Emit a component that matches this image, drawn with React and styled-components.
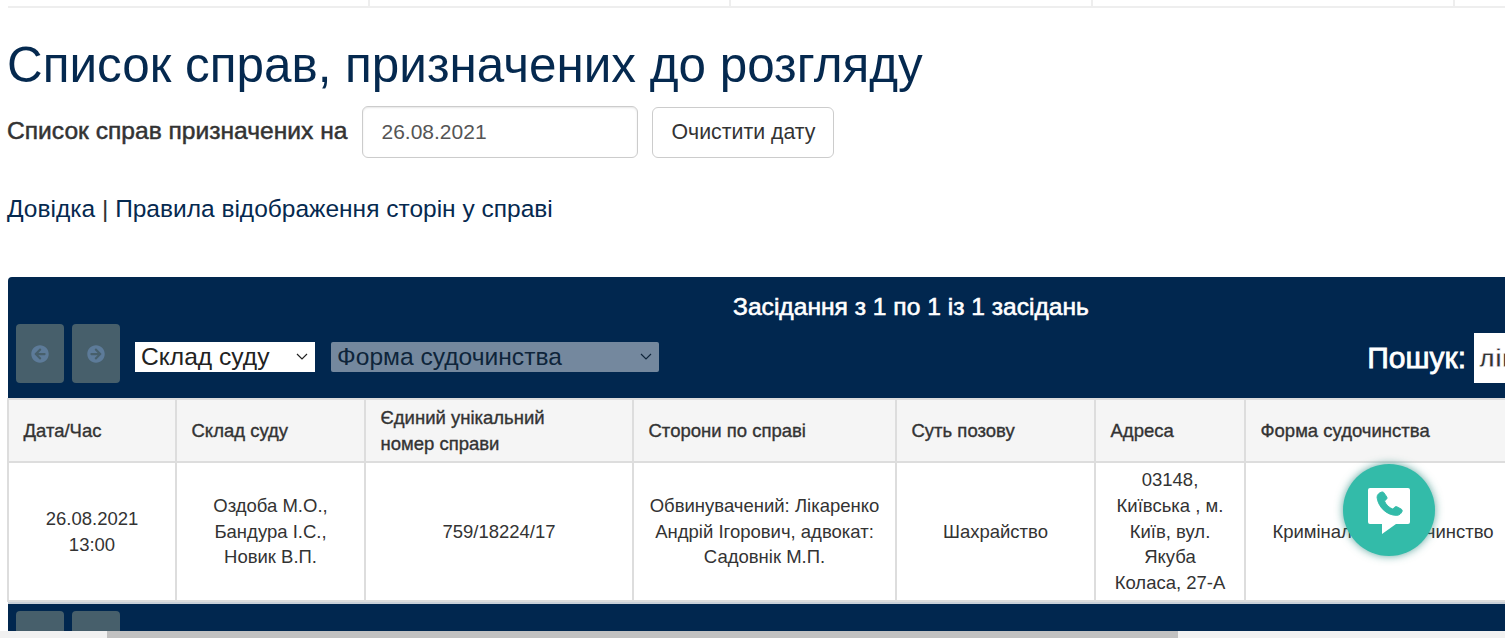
import React from 'react';
import styled, { createGlobalStyle } from 'styled-components';
import { FaArrowCircleLeft, FaArrowCircleRight } from 'react-icons/fa';

const navy = '#01274f';

const chevron =
  "url(\"data:image/svg+xml,%3Csvg xmlns='http://www.w3.org/2000/svg' width='12' height='7' viewBox='0 0 12 7'%3E%3Cpath d='M1 1l5 5 5-5' fill='none' stroke='%23222' stroke-width='1.2'/%3E%3C/svg%3E\")";

const columns = [
  { title: 'Дата/Час', width: 168, value: '26.08.2021 13:00' },
  { title: 'Склад суду', width: 189, value: 'Оздоба М.О., Бандура І.С., Новик В.П.' },
  { title: 'Єдиний унікальний\nномер справи', width: 268, value: '759/18224/17' },
  {
    title: 'Сторони по справі',
    width: 263,
    value: 'Обвинувачений: Лікаренко Андрій Ігорович, адвокат: Садовнік М.П.',
  },
  { title: 'Суть позову', width: 199, value: 'Шахрайство' },
  { title: 'Адреса', width: 150, value: '03148, Київська , м. Київ, вул. Якуба Коласа, 27-А' },
  { title: 'Форма судочинства', width: 276, value: 'Кримінальне судочинство' },
];

const GlobalStyle = createGlobalStyle`
  html,
  body {
    margin: 0;
    height: 100%;
    overflow: hidden;
    background: #fff;
  }

  body {
    font-family: 'Liberation Sans', Arial, sans-serif;
    color: #333;
  }
`;

const Page = styled.div`
  display: flex;
  flex-direction: column;
  height: 638px;
`;

const Viewport = styled.main`
  flex: 1;
  min-height: 0;
  overflow: hidden;
  padding: 0 0 0 8px;
`;

const TopNav = styled.nav`
  display: flex;
  width: 1600px;
  height: 6px;
  border-bottom: 2px solid #eee;
`;

const NavCell = styled.div`
  box-sizing: border-box;
  width: ${(p) => p.$width}px;
  flex: none;
  border-right: 2px solid #eee;
`;

const Title = styled.h1`
  margin: 30px 0 0 -1px;
  font-size: 49.4px;
  line-height: 54px;
  font-weight: 400;
  color: #05294f;
  white-space: nowrap;
`;

const DateRow = styled.form`
  display: flex;
  align-items: center;
  margin-top: 14px;
  height: 52px;
`;

const DateLabel = styled.label`
  margin: -2px 15px 0 -1px;
  font-size: 24.6px;
  -webkit-text-stroke: 0.5px #333;
  color: #333;
`;

const DateInput = styled.input`
  box-sizing: border-box;
  width: 276px;
  height: 52px;
  padding: 0 18px;
  border: 1px solid #ccc;
  border-radius: 6px;
  box-shadow: inset 0 1px 2px rgba(0, 0, 0, 0.1);
  font: 400 21px 'Liberation Sans', Arial, sans-serif;
  color: #555;
`;

const ClearButton = styled.button`
  box-sizing: border-box;
  width: 182px;
  height: 51px;
  margin-left: 14px;
  border: 1px solid #ccc;
  border-radius: 6px;
  background: #fff;
  font: 400 21.3px 'Liberation Sans', Arial, sans-serif;
  color: #333;
`;

const HelpLinks = styled.p`
  margin: 37px 0 0 -1px;
  font-size: 24.5px;
  line-height: 28px;
  color: #333;
`;

const HelpLink = styled.a`
  color: #05294f;
  text-decoration: none;
`;

const Panel = styled.section`
  width: 1806px;
  margin-top: 54px;
`;

const Bar = styled.div`
  background: ${navy};
  border-radius: ${(p) => (p.$top ? '4px 4px 0 0' : '0')};
  padding: ${(p) => (p.$top ? '16px 0 0' : '7px 8px')};
  height: ${(p) => (p.$top ? '105px' : 'auto')};
  border-top: ${(p) => (p.$top ? 'none' : '2px solid #c9d0d8')};
`;

const Summary = styled.div`
  text-align: center;
  font-size: 24.6px;
  line-height: 28px;
  -webkit-text-stroke: 0.6px #fff;
  color: #fff;
`;

const Controls = styled.div`
  display: flex;
  align-items: flex-end;
  justify-content: space-between;
  margin-top: 3px;
  padding-left: 8px;
`;

const ControlGroup = styled.div`
  display: flex;
  align-items: center;
`;

const PageButton = styled.button`
  display: flex;
  align-items: center;
  justify-content: center;
  width: 48px;
  height: 59px;
  margin-right: 8px;
  padding: 0;
  border: none;
  border-radius: 4px;
  background: #475f6b;
  color: #5d7b99;
  font-size: 18px;
`;

const FilterSelect = styled.select`
  box-sizing: border-box;
  width: ${(p) => p.$width}px;
  height: 30px;
  margin: 6px 0 0 ${(p) => p.$gap}px;
  padding: 0 0 0 6px;
  border: none;
  border-radius: ${(p) => (p.disabled ? '2px' : '0')};
  appearance: none;
  background: #fff ${chevron} no-repeat right 7px center;
  font: 400 24.6px 'Liberation Sans', Arial, sans-serif;
  color: #222;
  opacity: ${(p) => (p.disabled ? 0.45 : 1)};
`;

const SearchLabel = styled.label`
  display: flex;
  align-items: center;
  font-size: 30px;
  -webkit-text-stroke: 0.8px #fff;
  color: #fff;
`;

const SearchInput = styled.input`
  box-sizing: border-box;
  width: 340px;
  height: 50px;
  margin-left: 8px;
  padding: 0 5px;
  border: none;
  font: 700 25px 'Liberation Sans', Arial, sans-serif;
  color: #333;
`;

const Table = styled.table`
  width: 1806px;
  margin-left: -1px;
  table-layout: fixed;
  border-collapse: collapse;
  font-size: 18.5px;
  line-height: 25.7px;
`;

const HeadCell = styled.th`
  width: ${(p) => p.$width}px;
  box-sizing: border-box;
  height: 63px;
  padding: 0 14.5px;
  border: 2px solid #ddd;
  background: #f5f5f5;
  text-align: left;
  font-weight: 400;
  white-space: pre-line;
  -webkit-text-stroke: 0.35px #333;
  color: #333;
`;

const BodyCell = styled.td`
  box-sizing: border-box;
  height: 139px;
  padding: 0 15px;
  border: 2px solid #ddd;
  text-align: center;
  color: #333;
`;

const CallButton = styled.button`
  position: fixed;
  right: 70px;
  bottom: 82px;
  display: flex;
  align-items: center;
  justify-content: center;
  width: 92px;
  height: 92px;
  padding: 0;
  border: none;
  border-radius: 50%;
  background: #33bba9;
  box-shadow: 0 0 8px rgba(30, 130, 120, 0.7);
`;

const Scrollbar = styled.div`
  flex: none;
  height: 7px;
  padding-left: 107px;
  background: #f1f1f1;
`;

const ScrollThumb = styled.div`
  width: 1071px;
  height: 100%;
  background: #c1c1c1;
`;

const CallIcon = () => (
  <svg width="42" height="46" viewBox="0 0 42 46" style={{ marginTop: 1 }}>
    <path
      d="M2 0H40a2 2 0 0 1 2 2V34a2 2 0 0 1-2 2H28L14 46V36H2a2 2 0 0 1-2-2V2a2 2 0 0 1 2-2z"
      fill="#fff"
    />
    <path
      transform="translate(1.6 -1.4) scale(.93 .9)"
      d="M13 6c-3 1-5 3-5 6 1 10 10 20 21 20 3 0 5-2 6-4.500 .3-1-.2-2-1-2.500l-4.500-2.500c-1-.5-2-.3-2.700.5l-1.800 2c-4-1.500-7.500-5-9-9l2-1.800c.8-.7 1-1.800.5-2.700L15.500 7c-.5-1-1.500-1.300-2.500-1z"
      fill="#33bba9"
      stroke="#33bba9"
      strokeWidth="1"
      strokeLinejoin="round"
    />
  </svg>
);

const ToolbarButtons = () => (
  <ControlGroup>
    <PageButton type="button" disabled aria-label="Назад">
      <FaArrowCircleLeft />
    </PageButton>
    <PageButton type="button" disabled aria-label="Вперед">
      <FaArrowCircleRight />
    </PageButton>
  </ControlGroup>
);

const App = () => (
  <Page>
    <GlobalStyle />
    <Viewport>
      <TopNav>
        {[362, 361, 362, 362].map((width, i) => (
          <NavCell key={i} $width={width} />
        ))}
      </TopNav>
      <Title>Список справ, призначених до розгляду</Title>
      <DateRow>
        <DateLabel>Список справ призначених на</DateLabel>
        <DateInput defaultValue="26.08.2021" />
        <ClearButton type="button">Очистити дату</ClearButton>
      </DateRow>
      <HelpLinks>
        <HelpLink href="#help">Довідка</HelpLink> | <HelpLink href="#rules">Правила відображення сторін у справі</HelpLink>
      </HelpLinks>
      <Panel>
        <Bar $top>
          <Summary>Засідання з 1 по 1 із 1 засідань</Summary>
          <Controls>
            <ControlGroup>
              <ToolbarButtons />
              <FilterSelect $width={180} $gap={7} defaultValue="court">
                <option value="court">Склад суду</option>
              </FilterSelect>
              <FilterSelect $width={328} $gap={16} disabled defaultValue="form">
                <option value="form">Форма судочинства</option>
              </FilterSelect>
            </ControlGroup>
            <SearchLabel>
              Пошук:
              <SearchInput defaultValue="лікаренко" />
            </SearchLabel>
          </Controls>
        </Bar>
        <Table>
          <thead>
            <tr>
              {columns.map((col) => (
                <HeadCell key={col.title} $width={col.width}>
                  {col.title}
                </HeadCell>
              ))}
              <HeadCell />
            </tr>
          </thead>
          <tbody>
            <tr>
              {columns.map((col) => (
                <BodyCell key={col.title}>{col.value}</BodyCell>
              ))}
              <BodyCell />
            </tr>
          </tbody>
        </Table>
        <Bar>
          <ToolbarButtons />
        </Bar>
      </Panel>
    </Viewport>
    <Scrollbar>
      <ScrollThumb />
    </Scrollbar>
    <CallButton type="button" aria-label="Зателефонувати">
      <CallIcon />
    </CallButton>
  </Page>
);

export default App;
